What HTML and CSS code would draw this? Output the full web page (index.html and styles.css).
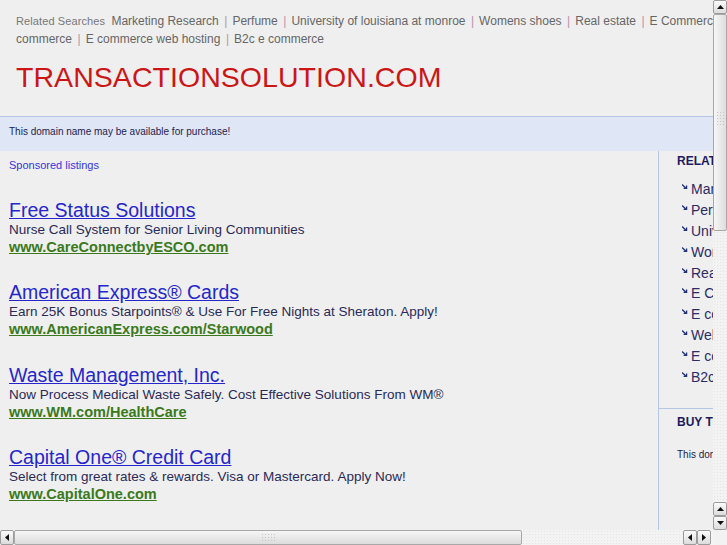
FILE: index.html
```html
<!DOCTYPE html>
<html>
<head>
<meta charset="utf-8">
<link rel="stylesheet" href="styles.css">
</head>
<body>
<div class="window">
  <div class="viewport">
    <div class="page">
      <div class="header">
        <div class="related">
          <span class="rs-label">Related Searches</span>
          <a href="#">Marketing Research</a><span class="sep">|</span><a href="#">Perfume</a><span class="sep">|</span><a href="#">University of louisiana at monroe</a><span class="sep">|</span><a href="#">Womens shoes</a><span class="sep">|</span><a href="#">Real estate</a><span class="sep">|</span><a href="#">E Commerce</a><span class="sep">|</span><a href="#">E commerce solutions</a><span class="sep">|</span><a href="#">Web<br>commerce</a><span class="sep">|</span><a href="#">E commerce web hosting</a><span class="sep">|</span><a href="#">B2c e commerce</a>
        </div>
        <h1 class="domain">TRANSACTIONSOLUTION.COM</h1>
      </div>
      <div class="notice">This domain name may be available for purchase!</div>
      <div class="main">
        <div class="left">
          <div class="sponsored">Sponsored listings</div>
          <div class="ad">
            <a class="ad-title" href="#">Free Status Solutions</a>
            <div class="ad-desc">Nurse Call System for Senior Living Communities</div>
            <a class="ad-url" href="#">www.CareConnectbyESCO.com</a>
          </div>
          <div class="ad">
            <a class="ad-title" href="#">American Express® Cards</a>
            <div class="ad-desc">Earn 25K Bonus Starpoints® &amp; Use For Free Nights at Sheraton. Apply!</div>
            <a class="ad-url" href="#">www.AmericanExpress.com/Starwood</a>
          </div>
          <div class="ad">
            <a class="ad-title" href="#">Waste Management, Inc.</a>
            <div class="ad-desc">Now Process Medical Waste Safely. Cost Effective Solutions From WM®</div>
            <a class="ad-url" href="#">www.WM.com/HealthCare</a>
          </div>
          <div class="ad">
            <a class="ad-title" href="#">Capital One® Credit Card</a>
            <div class="ad-desc">Select from great rates &amp; rewards. Visa or Mastercard. Apply Now!</div>
            <a class="ad-url" href="#">www.CapitalOne.com</a>
          </div>
        </div>
        <div class="right">
          <div class="rel-box">
            <div class="side-head">RELATED SEARCHES</div>
            <ul class="rel-list">
              <li><svg class="bullet" viewBox="0 0 6 6" width="6" height="6"><path d="M0 0.6 L4.2 4.2 M1.6 4.4 H4.6 V1.4" stroke="#223377" stroke-width="1.3" fill="none"/></svg><a href="#">Marketing Research</a></li>
              <li><svg class="bullet" viewBox="0 0 6 6" width="6" height="6"><path d="M0 0.6 L4.2 4.2 M1.6 4.4 H4.6 V1.4" stroke="#223377" stroke-width="1.3" fill="none"/></svg><a href="#">Perfume</a></li>
              <li><svg class="bullet" viewBox="0 0 6 6" width="6" height="6"><path d="M0 0.6 L4.2 4.2 M1.6 4.4 H4.6 V1.4" stroke="#223377" stroke-width="1.3" fill="none"/></svg><a href="#">University of louisiana at monroe</a></li>
              <li><svg class="bullet" viewBox="0 0 6 6" width="6" height="6"><path d="M0 0.6 L4.2 4.2 M1.6 4.4 H4.6 V1.4" stroke="#223377" stroke-width="1.3" fill="none"/></svg><a href="#">Womens shoes</a></li>
              <li><svg class="bullet" viewBox="0 0 6 6" width="6" height="6"><path d="M0 0.6 L4.2 4.2 M1.6 4.4 H4.6 V1.4" stroke="#223377" stroke-width="1.3" fill="none"/></svg><a href="#">Real estate</a></li>
              <li><svg class="bullet" viewBox="0 0 6 6" width="6" height="6"><path d="M0 0.6 L4.2 4.2 M1.6 4.4 H4.6 V1.4" stroke="#223377" stroke-width="1.3" fill="none"/></svg><a href="#">E Commerce</a></li>
              <li><svg class="bullet" viewBox="0 0 6 6" width="6" height="6"><path d="M0 0.6 L4.2 4.2 M1.6 4.4 H4.6 V1.4" stroke="#223377" stroke-width="1.3" fill="none"/></svg><a href="#">E commerce solutions</a></li>
              <li><svg class="bullet" viewBox="0 0 6 6" width="6" height="6"><path d="M0 0.6 L4.2 4.2 M1.6 4.4 H4.6 V1.4" stroke="#223377" stroke-width="1.3" fill="none"/></svg><a href="#">Web commerce</a></li>
              <li><svg class="bullet" viewBox="0 0 6 6" width="6" height="6"><path d="M0 0.6 L4.2 4.2 M1.6 4.4 H4.6 V1.4" stroke="#223377" stroke-width="1.3" fill="none"/></svg><a href="#">E commerce web hosting</a></li>
              <li><svg class="bullet" viewBox="0 0 6 6" width="6" height="6"><path d="M0 0.6 L4.2 4.2 M1.6 4.4 H4.6 V1.4" stroke="#223377" stroke-width="1.3" fill="none"/></svg><a href="#">B2c e commerce</a></li>
            </ul>
          </div>
          <div class="buy-box">
            <div class="side-head">BUY THIS DOMAIN</div>
            <p class="buy-text">This domain name may be available for purchase!</p>
          </div>
        </div>
      </div>
    </div>
  </div>
  <div class="vscroll">
    <div class="sbtn"><svg viewBox="0 0 7 4" width="7" height="4"><path d="M0 4 L3.5 0 L7 4Z" fill="#111"/></svg></div>
    <div class="vthumb"><div class="grip vgrip"></div></div>
    <div class="track"></div>
    <div class="sbtn"><svg viewBox="0 0 7 4" width="7" height="4"><path d="M0 4 L3.5 0 L7 4Z" fill="#111"/></svg></div>
    <div class="sbtn"><svg viewBox="0 0 7 4" width="7" height="4"><path d="M0 0 L3.5 4 L7 0Z" fill="#111"/></svg></div>
  </div>
  <div class="hscroll">
    <div class="sbtn"><svg viewBox="0 0 4 7" width="4" height="7"><path d="M4 0 L0 3.5 L4 7Z" fill="#111"/></svg></div>
    <div class="hthumb"><div class="grip hgrip"></div></div>
    <div class="track"></div>
    <div class="sbtn"><svg viewBox="0 0 4 7" width="4" height="7"><path d="M4 0 L0 3.5 L4 7Z" fill="#111"/></svg></div>
    <div class="sbtn"><svg viewBox="0 0 4 7" width="4" height="7"><path d="M0 0 L4 3.5 L0 7Z" fill="#111"/></svg></div>
    <div class="hgap"></div>
  </div>
  <div class="corner"></div>
</div>
</body>
</html>
```
FILE: styles.css
```css
* { box-sizing: border-box; }
html, body { margin: 0; padding: 0; }
body {
  width: 727px;
  height: 545px;
  overflow: hidden;
  font-family: "Liberation Sans", Arial, sans-serif;
  background: #efefef;
}
a { text-decoration: none; }

.window {
  display: grid;
  grid-template-columns: 713px 14px;
  grid-template-rows: 530px 15px;
  width: 727px;
  height: 545px;
}
.viewport {
  overflow: hidden;
  background: #efefef;
}
.page {
  width: 940px;
}

/* header */
.header {
  padding: 13px 0 0 16px;
  height: 116px;
}
.related {
  font-size: 12px;
  line-height: 17.5px;
  color: #666;
}
.related a { color: #666; }
.rs-label {
  font-size: 11px;
  color: #777;
  margin-right: 3px;
  letter-spacing: 0.1px;
}
.sep {
  color: #b793ad;
  margin: 0 5px 0 5.5px;
}
.domain {
  margin: 11px 0 0 0;
  font-size: 28.5px;
  line-height: 36px;
  font-weight: normal;
  color: #cc1616;
  letter-spacing: 0.05px;
}

/* notice */
.notice {
  height: 35px;
  border-top: 1px solid #b3c6e6;
  background: #dfe6f5;
  font-size: 10px;
  line-height: 12px;
  padding: 9px 0 0 9px;
  color: #1c1c50;
}

/* main */
.main {
  display: flex;
}
.left {
  width: 659px;
  border-right: 1px solid #b3c6e6;
  padding: 7px 0 40px 9px;
  min-height: 400px;
}
.sponsored {
  font-size: 11px;
  line-height: 14px;
  color: #3535e0;
  margin-bottom: 28px;
}
.ad {
  margin-bottom: 26.4px;
}
.ad-title {
  display: inline-block;
  font-size: 19.5px;
  line-height: 21px;
  color: #2626cc;
  text-decoration: underline;
}
.ad-desc {
  font-size: 13.5px;
  line-height: 17px;
  color: #2a2a58;
}
.ad-url {
  display: inline-block;
  font-size: 14.5px;
  line-height: 16px;
  font-weight: bold;
  color: #3a7a1c;
  text-decoration: underline;
}

.right {
  width: 280px;
}
.rel-box {
  padding: 3px 0 21px 18px;
  border-bottom: 1px solid #b3c6e6;
}
.side-head {
  font-size: 12px;
  font-weight: bold;
  color: #1b1b5e;
  line-height: 14px;
}
.rel-list {
  list-style: none;
  margin: 11px 0 0 0;
  padding: 0 0 0 5px;
}
.rel-list li {
  display: flex;
  align-items: center;
  height: 20.8px;
  white-space: nowrap;
}
.rel-list a {
  font-size: 14px;
  color: #2b2b66;
}
.bullet {
  margin: 0 3px 4px 0;
  flex: none;
}
.buy-box {
  padding: 6px 0 0 18px;
}
.buy-text {
  margin: 20px 0 0 0;
  font-size: 10px;
  color: #1c1c50;
  white-space: nowrap;
}

/* scrollbars */
.vscroll {
  display: flex;
  flex-direction: column;
  background: #f4f4f4;
}
.hscroll {
  display: flex;
  background: #f4f4f4;
}
.corner { background: #f2f2f2; }
.sbtn {
  flex: none;
  width: 14px;
  height: 14px;
  border: 1px solid #9c9c9c;
  border-radius: 2px;
  background: linear-gradient(#fbfbfb, #dcdcdc);
  display: flex;
  align-items: center;
  justify-content: center;
}
.vscroll .sbtn { width: 14px; }
.hscroll .sbtn { height: 15px; }
.vthumb {
  flex: none;
  height: 217px;
  border: 1px solid #a8a8a8;
  border-radius: 2px;
  background: linear-gradient(90deg, #f6f6f6, #dedede);
  display: flex;
  justify-content: center;
  padding-top: 96px;
}
.hthumb {
  flex: none;
  width: 508px;
  border: 1px solid #a8a8a8;
  border-radius: 2px;
  background: linear-gradient(#f6f6f6, #dcdcdc);
  display: flex;
  justify-content: center;
  align-items: center;
}
.grip {
  background-image: radial-gradient(circle, #c4c4c4 0.8px, transparent 1px);
  background-size: 3px 3px;
}
.vgrip { width: 9px; height: 15px; }
.hgrip { width: 15px; height: 9px; }
.track {
  flex: 1;
  background-color: #f3f3f3;
  background-image: radial-gradient(circle, #e4e4e4 0.6px, transparent 0.8px);
  background-size: 3px 3px;
}
.hgap { width: 2px; flex: none; }
```
